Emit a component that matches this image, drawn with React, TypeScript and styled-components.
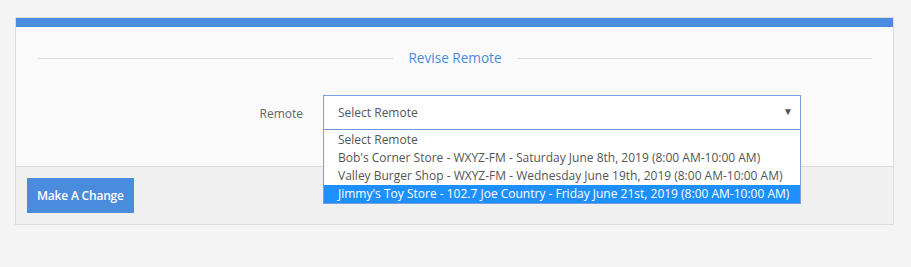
import React from 'react';
import styled, { createGlobalStyle } from 'styled-components';

const GlobalStyle = createGlobalStyle`
  html, body {
    margin: 0;
    padding: 0;
    background: #f4f4f4;
    font-family: "Open Sans", "Liberation Sans", sans-serif;
  }
`;

const Page = styled.div`
  padding: 17px 17px 0 15px;
  min-height: 267px;
  box-sizing: border-box;
`;

const Panel = styled.div`
  border: 1px solid #dcdcdc;
  background: #fafafa;
`;

const TopBar = styled.div`
  height: 9px;
  background: #4a8bdd;
`;

const Body = styled.div`
  padding: 21px 21px 36px 22px;
`;

const Legend = styled.div`
  display: flex;
  align-items: center;
  gap: 15px;
  color: #4a8add;
  font-size: 13.6px;
  line-height: 20px;
  &::before,
  &::after {
    content: '';
    flex: 1;
    height: 1px;
    background: #dddddd;
  }
`;

const FormRow = styled.div`
  display: grid;
  grid-template-columns: 265px 478px;
  column-gap: 20px;
  align-items: center;
  margin-top: 27px;
`;

const Label = styled.label`
  text-align: right;
  font-size: 12px;
  color: #666;
  padding-top: 1px;
`;

const SelectWrap = styled.div`
  position: relative;
`;

const SelectBox = styled.div`
  display: flex;
  align-items: center;
  justify-content: space-between;
  height: 35px;
  box-sizing: border-box;
  border: 1px solid #7b9fdc;
  background: #fff;
  padding: 0 7px 0 14px;
  font-size: 12px;
  color: #555;
`;

const Arrow = styled.span`
  font-size: 10px;
  color: #555;
  margin-top: -3px;
`;

const OptionList = styled.div`
  position: absolute;
  top: 100%;
  left: 0;
  right: 0;
  margin-top: -1px;
  padding-top: 1px;
  border: 1px solid #7b9fdc;
  border-top-color: #6f95d8;
  background: #fff;
  z-index: 2;
`;

const Option = styled.div<{ $active?: boolean }>`
  height: 18px;
  line-height: 18px;
  padding-left: 14px;
  font-size: 12px;
  white-space: nowrap;
  color: ${(p) => (p.$active ? '#fff' : '#555')};
  background: ${(p) => (p.$active ? '#1e8fff' : 'transparent')};
`;

const Footer = styled.div`
  border-top: 1px solid #dcdcdc;
  background: #f0f0f0;
  padding: 11px;
`;

const Button = styled.button`
  height: 35px;
  padding: 0 10px;
  border: none;
  background: #4a8bdd;
  color: #fff;
  font-family: "Open Sans", "Liberation Sans", sans-serif;
  font-size: 12px;
  font-weight: 600;
  letter-spacing: -0.2px;
  cursor: pointer;
`;

const options = [
  'Select Remote',
  "Bob's Corner Store - WXYZ-FM - Saturday June 8th, 2019 (8:00 AM-10:00 AM)",
  'Valley Burger Shop - WXYZ-FM - Wednesday June 19th, 2019 (8:00 AM-10:00 AM)',
  "Jimmy's Toy Store - 102.7 Joe Country - Friday June 21st, 2019 (8:00 AM-10:00 AM)",
];

export default function App() {
  return (
    <Page>
      <GlobalStyle />
      <Panel>
        <TopBar />
        <Body>
          <Legend>Revise Remote</Legend>
          <FormRow>
            <Label>Remote</Label>
            <SelectWrap>
              <SelectBox>
                <span>Select Remote</span>
                <Arrow>▼</Arrow>
              </SelectBox>
              <OptionList>
                {options.map((o, i) => (
                  <Option key={o} $active={i === 3}>
                    {o}
                  </Option>
                ))}
              </OptionList>
            </SelectWrap>
          </FormRow>
        </Body>
        <Footer>
          <Button>Make A Change</Button>
        </Footer>
      </Panel>
    </Page>
  );
}
